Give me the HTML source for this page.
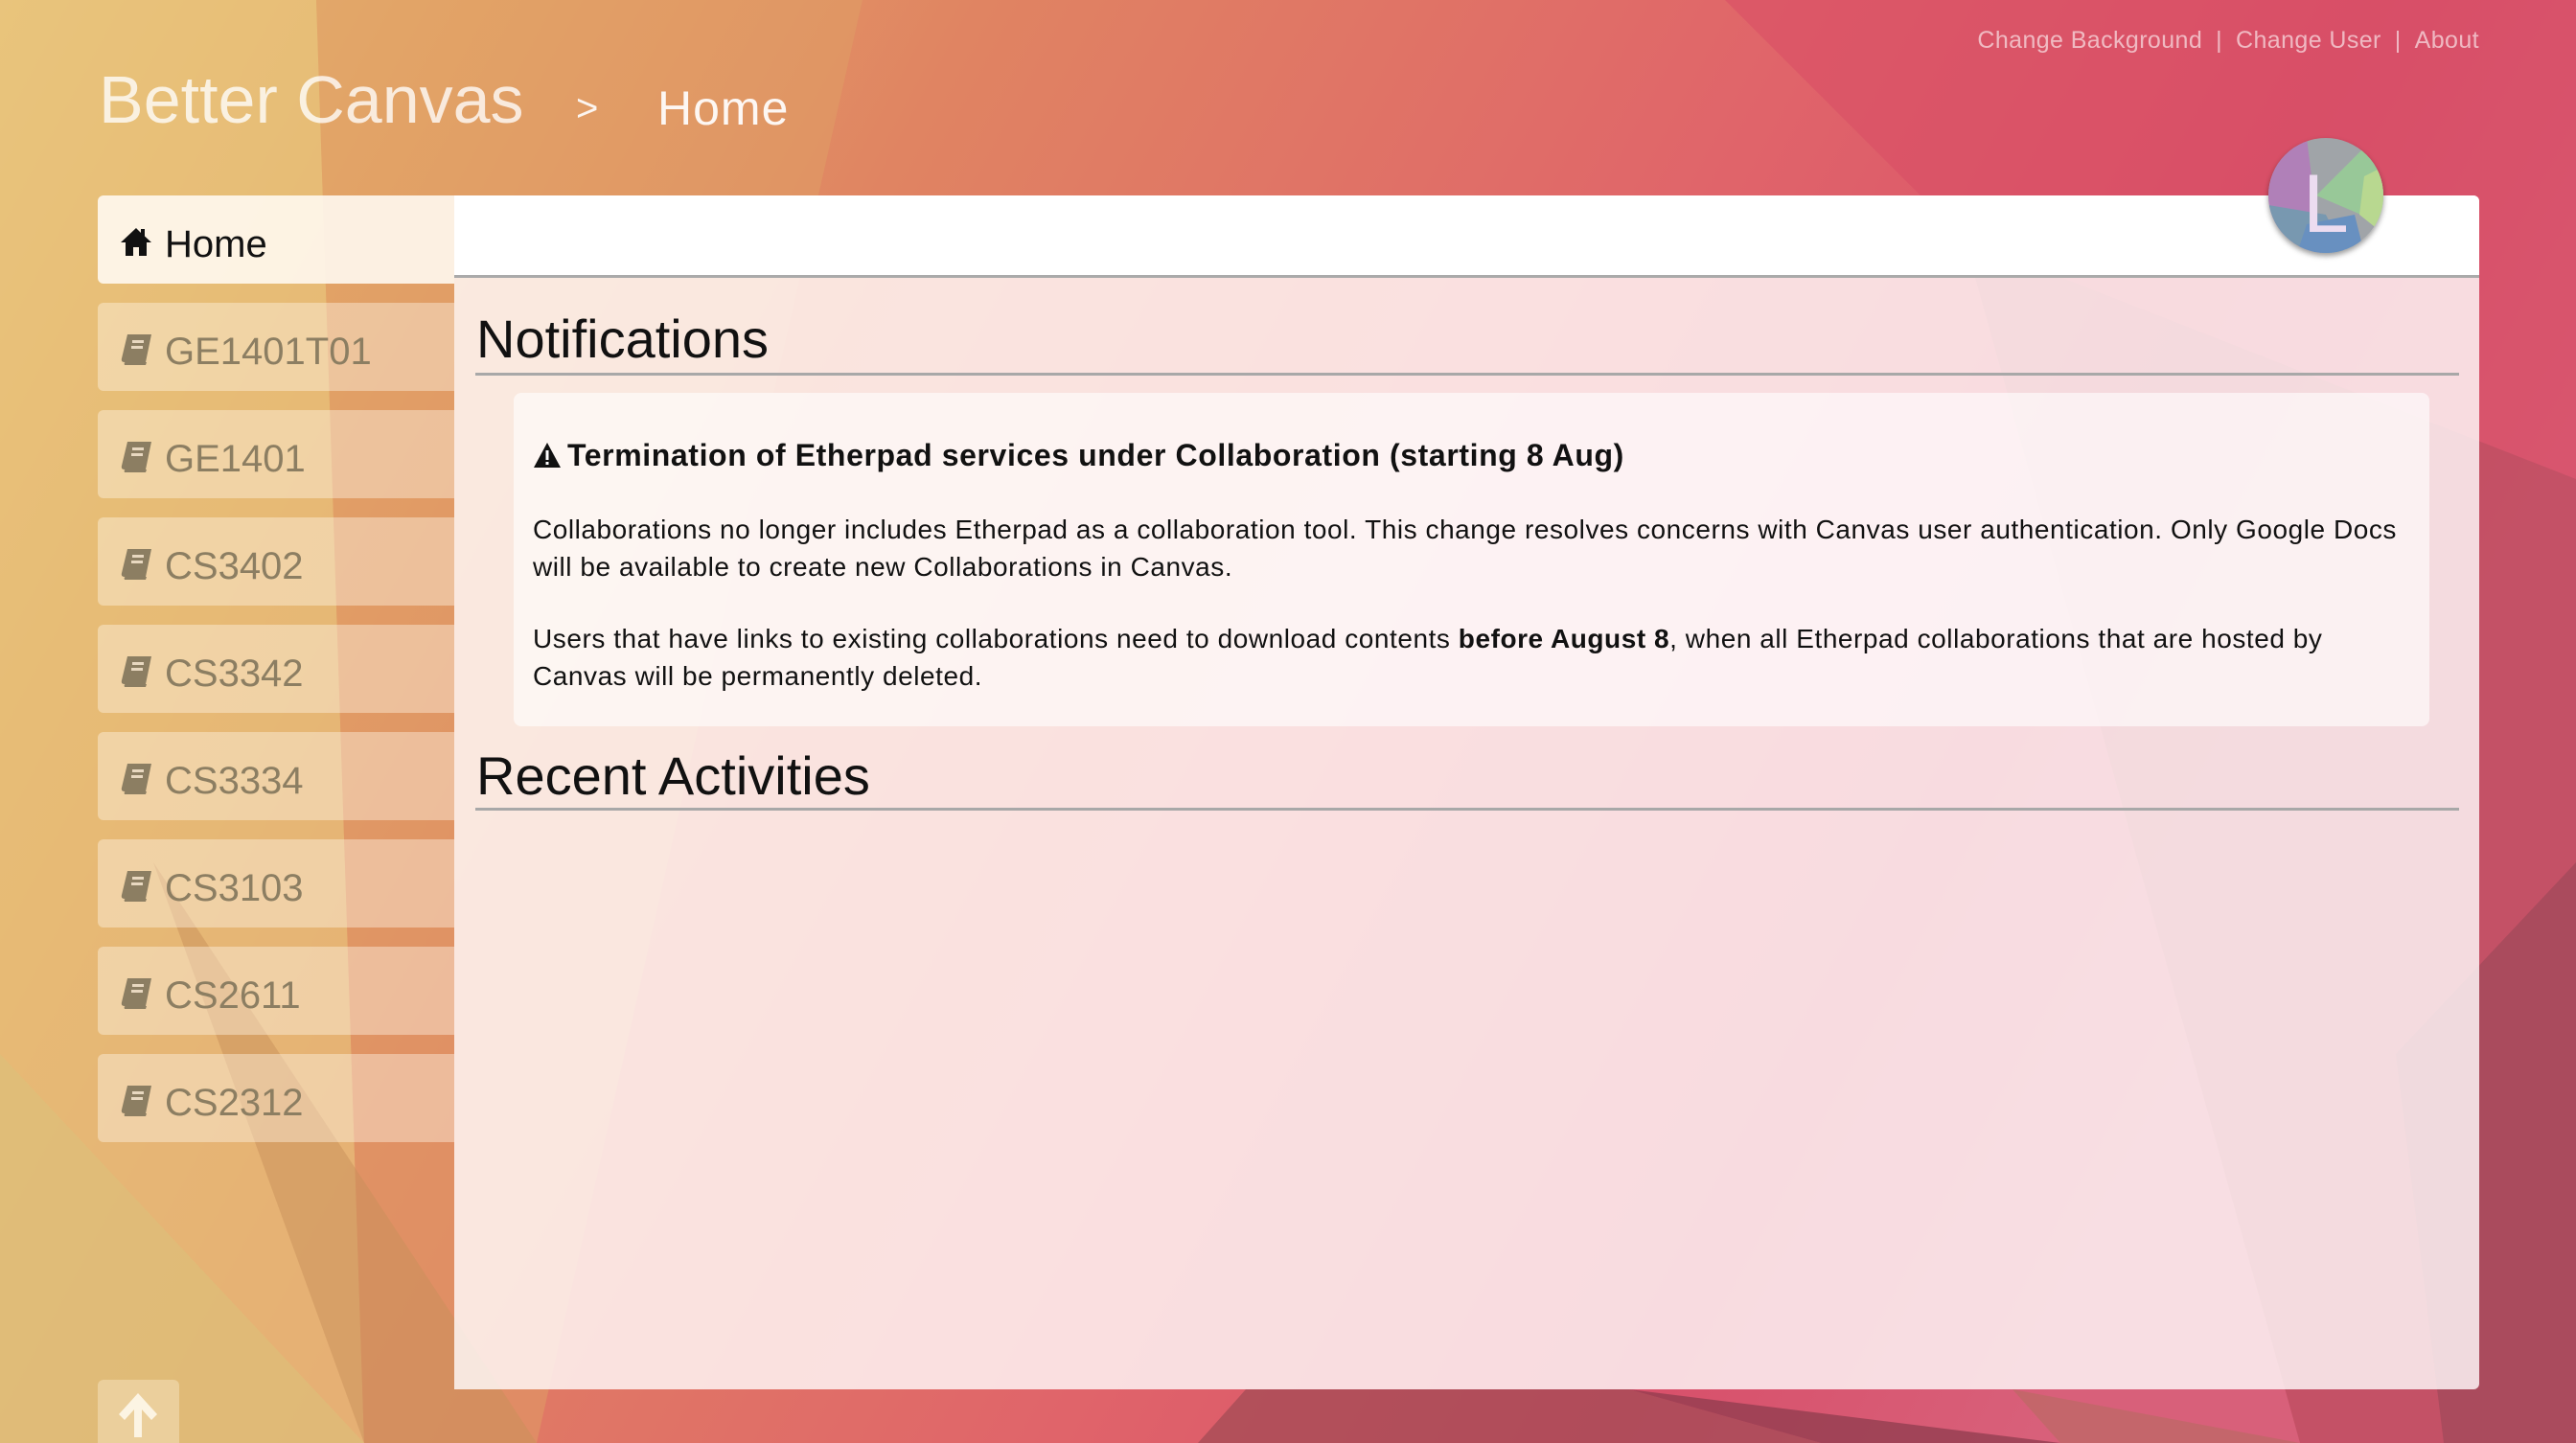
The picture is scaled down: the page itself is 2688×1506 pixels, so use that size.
<!DOCTYPE html>
<html><head><meta charset="utf-8">
<style>
*{margin:0;padding:0;box-sizing:border-box}
html,body{width:2688px;height:1506px;overflow:hidden}
body{position:relative;font-family:"Liberation Sans",sans-serif;background:#e08a68}
#bg{position:absolute;left:0;top:0}
.title{position:absolute;left:103px;top:69px;font-size:70px;color:rgba(255,255,255,0.78);font-weight:300;white-space:nowrap;line-height:1}
.crumb{position:absolute;left:601px;top:93px;font-size:40px;color:rgba(255,255,255,0.9);line-height:1}
.crumbhome{position:absolute;left:686px;top:88px;font-size:50px;color:rgba(255,255,255,0.92);line-height:1;letter-spacing:1px}
.links{position:absolute;right:101px;top:28px;font-size:25px;color:rgba(255,255,255,0.6);white-space:nowrap;letter-spacing:0.4px}
.links span{margin:0 14px}
.item{position:absolute;left:102px;width:372px;height:92px;background:rgba(255,245,230,0.42);border-radius:6px 0 0 6px;font-size:40px;color:#8c7e62;padding-left:70px;line-height:102px;white-space:nowrap}
.item svg{position:absolute;left:22px;top:32px}
.item.home{background:rgba(255,248,240,0.9);color:#111}
.panel{position:absolute;left:474px;top:204px;width:2113px;height:1246px;background:rgba(255,250,250,0.82);border-radius:0 6px 6px 0}
.phead{position:absolute;left:0;top:0;width:100%;height:86px;background:#fff;border-bottom:3px solid #aaa;border-radius:0 6px 0 0}
.h2{position:absolute;left:23px;font-size:56px;color:#111;font-weight:300;white-space:nowrap;line-height:1}
.hr{position:absolute;left:22px;width:2070px;height:3px;background:#a8a8a8}
.box{position:absolute;left:62px;top:206px;width:1999px;height:348px;background:rgba(255,255,255,0.6);border-radius:8px}
.box .t{position:absolute;left:20px;top:47px;font-size:32px;font-weight:bold;color:#111;white-space:nowrap;letter-spacing:0.6px}
.box p{position:absolute;left:20px;font-size:28px;line-height:39px;color:#111;white-space:nowrap;letter-spacing:0.55px}
.avatar{position:absolute;left:2367px;top:144px;width:120px;height:120px;border-radius:50%;overflow:hidden;box-shadow:0 3px 6px rgba(0,0,0,0.4)}
.up{position:absolute;left:102px;top:1440px;width:85px;height:70px;background:rgba(255,245,225,0.35);border-radius:6px 6px 0 0}
</style></head><body>
<svg id="bg" width="2688" height="1506" viewBox="0 0 2688 1506">
<defs><linearGradient id="g" x1="0" y1="0" x2="1" y2="0.3">
<stop offset="0" stop-color="#e9c27c"/><stop offset="0.15" stop-color="#e4a868"/><stop offset="0.35" stop-color="#e08462"/><stop offset="0.65" stop-color="#e0646a"/><stop offset="0.85" stop-color="#d8506a"/><stop offset="1" stop-color="#d8607a"/></linearGradient></defs>
<rect width="2688" height="1506" fill="url(#g)"/>
<polygon points="0,0 330,0 380,1506 0,1506" fill="#e8c47c" opacity="0.7"/>
<polygon points="330,0 900,0 560,1506 380,1506" fill="#e0a066" opacity="0.5"/>
<polygon points="0,1100 380,1506 0,1506" fill="#dcc07a" opacity="0.6"/>
<polygon points="160,900 560,1506 380,1506" fill="#c8905a" opacity="0.5"/>
<polygon points="1800,0 2688,0 2688,500 2050,250" fill="#d84e66" opacity="0.6"/>
<polygon points="2050,250 2688,500 2688,1506 2400,1506" fill="#b84858" opacity="0.6"/>
<polygon points="2500,1100 2688,900 2688,1506 2550,1506" fill="#a0485a" opacity="0.7"/>
<polygon points="1700,1450 2150,1506 1900,1506" fill="#8a3a4c" opacity="0.7"/>
<polygon points="1300,1450 1700,1450 1900,1506 1250,1506" fill="#a04a54" opacity="0.7"/>
<polygon points="2100,1450 2400,1506 2150,1506" fill="#b86a60" opacity="0.6"/>
</svg>
<div class="title">Better Canvas</div>
<div class="crumb">&gt;</div>
<div class="crumbhome">Home</div>
<div class="links">Change Background<span>|</span>Change User<span>|</span>About</div>

<div class="item home" style="top:204px"><svg width="36" height="32" viewBox="0 0 36 32"><path d="M18 2 L2 17 H7 V31 H15 V22 H21 V31 H29 V17 H34 L27 10.5 V3 H23 V7 Z" fill="#111"/></svg>Home</div>
<div class="item" style="top:316px"><svg width="36" height="34" viewBox="0 0 36 34"><path d="M9 1 H34 L28 30 H6 Q2 30 3 26 Z M6 33 H28 L29 30 H7 Q5 30 6 33Z" fill="#8c7e62"/><rect x="14" y="7" width="12" height="3" fill="#e8d8c0"/><rect x="13" y="13" width="12" height="3" fill="#e8d8c0"/></svg>GE1401T01</div>
<div class="item" style="top:428px"><svg width="36" height="34" viewBox="0 0 36 34"><path d="M9 1 H34 L28 30 H6 Q2 30 3 26 Z M6 33 H28 L29 30 H7 Q5 30 6 33Z" fill="#8c7e62"/><rect x="14" y="7" width="12" height="3" fill="#e8d8c0"/><rect x="13" y="13" width="12" height="3" fill="#e8d8c0"/></svg>GE1401</div>
<div class="item" style="top:540px"><svg width="36" height="34" viewBox="0 0 36 34"><path d="M9 1 H34 L28 30 H6 Q2 30 3 26 Z M6 33 H28 L29 30 H7 Q5 30 6 33Z" fill="#8c7e62"/><rect x="14" y="7" width="12" height="3" fill="#e8d8c0"/><rect x="13" y="13" width="12" height="3" fill="#e8d8c0"/></svg>CS3402</div>
<div class="item" style="top:652px"><svg width="36" height="34" viewBox="0 0 36 34"><path d="M9 1 H34 L28 30 H6 Q2 30 3 26 Z M6 33 H28 L29 30 H7 Q5 30 6 33Z" fill="#8c7e62"/><rect x="14" y="7" width="12" height="3" fill="#e8d8c0"/><rect x="13" y="13" width="12" height="3" fill="#e8d8c0"/></svg>CS3342</div>
<div class="item" style="top:764px"><svg width="36" height="34" viewBox="0 0 36 34"><path d="M9 1 H34 L28 30 H6 Q2 30 3 26 Z M6 33 H28 L29 30 H7 Q5 30 6 33Z" fill="#8c7e62"/><rect x="14" y="7" width="12" height="3" fill="#e8d8c0"/><rect x="13" y="13" width="12" height="3" fill="#e8d8c0"/></svg>CS3334</div>
<div class="item" style="top:876px"><svg width="36" height="34" viewBox="0 0 36 34"><path d="M9 1 H34 L28 30 H6 Q2 30 3 26 Z M6 33 H28 L29 30 H7 Q5 30 6 33Z" fill="#8c7e62"/><rect x="14" y="7" width="12" height="3" fill="#e8d8c0"/><rect x="13" y="13" width="12" height="3" fill="#e8d8c0"/></svg>CS3103</div>
<div class="item" style="top:988px"><svg width="36" height="34" viewBox="0 0 36 34"><path d="M9 1 H34 L28 30 H6 Q2 30 3 26 Z M6 33 H28 L29 30 H7 Q5 30 6 33Z" fill="#8c7e62"/><rect x="14" y="7" width="12" height="3" fill="#e8d8c0"/><rect x="13" y="13" width="12" height="3" fill="#e8d8c0"/></svg>CS2611</div>
<div class="item" style="top:1100px"><svg width="36" height="34" viewBox="0 0 36 34"><path d="M9 1 H34 L28 30 H6 Q2 30 3 26 Z M6 33 H28 L29 30 H7 Q5 30 6 33Z" fill="#8c7e62"/><rect x="14" y="7" width="12" height="3" fill="#e8d8c0"/><rect x="13" y="13" width="12" height="3" fill="#e8d8c0"/></svg>CS2312</div>

<div class="panel">
  <div class="phead"></div>
  <div class="h2" style="top:122px">Notifications</div>
  <div class="hr" style="top:185px"></div>
  <div class="box">
    <div class="t"><svg width="30" height="28" viewBox="0 0 30 28" style="vertical-align:-3px;margin-right:6px"><path d="M15 1 L29 27 H1 Z" fill="#111"/><rect x="13.5" y="9" width="3" height="10" fill="#fff"/><rect x="13.5" y="21" width="3" height="3" fill="#fff"/></svg>Termination of Etherpad services under Collaboration (starting 8 Aug)</div>
    <p style="top:123px">Collaborations no longer includes Etherpad as a collaboration tool. This change resolves concerns with Canvas user authentication. Only Google Docs<br>will be available to create new Collaborations in Canvas.</p>
    <p style="top:237px">Users that have links to existing collaborations need to download contents <b>before August 8</b>, when all Etherpad collaborations that are hosted by<br>Canvas will be permanently deleted.</p>
  </div>
  <div class="h2" style="top:578px">Recent Activities</div>
  <div class="hr" style="top:639px"></div>
</div>

<div class="avatar"><svg width="120" height="120" viewBox="0 0 120 120">
<rect width="120" height="120" fill="#a0a4a8"/>
<polygon points="0,0 40,0 55,120 0,120" fill="#b080b8"/>
<polygon points="50,60 100,10 120,40 120,90" fill="#98c898"/>
<polygon points="100,40 120,30 120,100 95,80" fill="#b8d890"/>
<polygon points="0,70 60,80 80,120 0,120" fill="#7898b0"/>
<polygon points="40,90 90,80 100,120 30,120" fill="#6890c0"/>
<text x="36" y="98" font-family="Liberation Sans,sans-serif" font-size="86" font-weight="300" fill="#ecdcf0">L</text>
</svg></div>

<div class="up"><svg width="85" height="66" viewBox="0 0 85 66"><path d="M42 14 L22 36 L28 42 L38 31 V60 H46 V31 L56 42 L62 36 Z" fill="rgba(255,250,240,0.85)"/></svg></div>
</body></html>
